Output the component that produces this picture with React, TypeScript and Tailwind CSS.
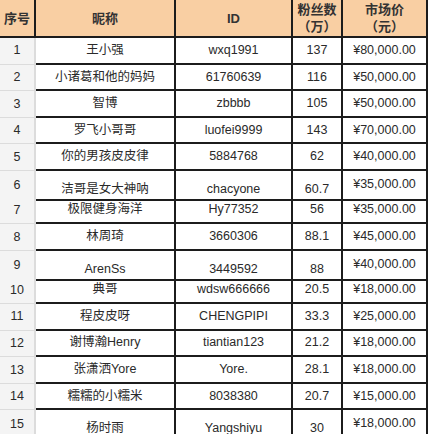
const rows: [string, string, string, string, string, boolean?][] = [
  ['1', '王小强', 'wxq1991', '137', '¥80,000.00'],
  ['2', '小诸葛和他的妈妈', '61760639', '116', '¥50,000.00'],
  ['3', '智博', 'zbbbb', '105', '¥50,000.00'],
  ['4', '罗飞小哥哥', 'luofei9999', '143', '¥70,000.00'],
  ['5', '你的男孩皮皮律', '5884768', '62', '¥40,000.00'],
  ['6', '洁哥是女大神呐', 'chacyone', '60.7', '¥35,000.00', true],
  ['7', '极限健身海洋', 'Hy77352', '56', '¥35,000.00'],
  ['8', '林周琦', '3660306', '88.1', '¥45,000.00'],
  ['9', 'ArenSs', '3449592', '88', '¥40,000.00', true],
  ['10', '典哥', 'wdsw666666', '20.5', '¥18,000.00'],
  ['11', '程皮皮呀', 'CHENGPIPI', '33.3', '¥25,000.00'],
  ['12', '谢博瀚Henry', 'tiantian123', '21.2', '¥18,000.00'],
  ['13', '张潇洒Yore', 'Yore.', '28.1', '¥18,000.00'],
  ['14', '糯糯的小糯米', '8038380', '20.7', '¥15,000.00'],
  ['15', '杨时雨', 'Yangshiyu', '30', '¥18,000.00', true],
];

const grid = 'grid grid-cols-[36px_140px_117px_50px_85px]';
const cell = 'flex items-center justify-center border-b-2 border-r-2 border-[#1c1c1c]';

export default function App() {
  return (
    <div
      className="w-[428px] h-[434px] overflow-hidden bg-white text-[#2a2a2a]"
      style={{ fontFamily: '"Liberation Sans", "Noto Sans CJK SC", sans-serif' }}
    >
      <div className={`${grid} h-[38px] bg-[#f9cfa3] text-[13px] font-bold leading-[17px] text-[#333]`}>
        <div className={cell}>序号</div>
        <div className={cell}>昵称</div>
        <div className={cell}>ID</div>
        <div className={`${cell} flex-col`}>
          <span>粉丝数</span>
          <span>（万）</span>
        </div>
        <div className={`${cell} flex-col border-r-0`}>
          <span>市场价</span>
          <span>（元）</span>
        </div>
      </div>
      {rows.map(([no, name, id, fans, price, low]) => (
        <div key={no} className={`${grid} h-[26.6px] text-[12.5px]`}>
          <div className="flex items-center justify-center border-b border-r-2 border-[#dcdcdc] bg-[#f4f4f4]">{no}</div>
          <div className={`${cell} ${low ? 'pt-[9px]' : ''}`}>{name}</div>
          <div className={`${cell} ${low ? 'pt-[9px]' : ''}`}>{id}</div>
          <div className={`${cell} ${low ? 'pt-[9px]' : ''}`}>{fans}</div>
          <div className={`${cell} border-r-0 ${low ? 'pb-[1px]' : ''}`}>{price}</div>
        </div>
      ))}
    </div>
  );
}
